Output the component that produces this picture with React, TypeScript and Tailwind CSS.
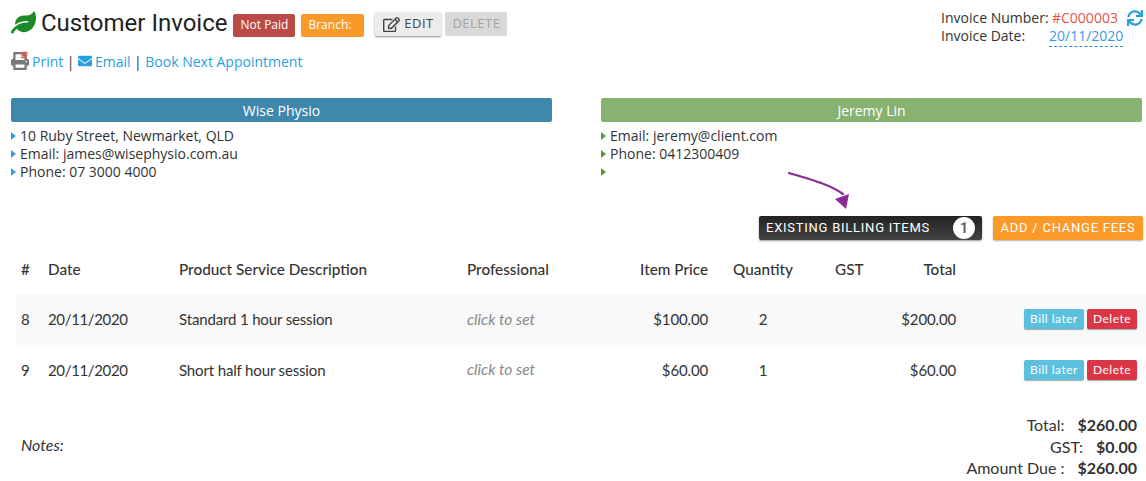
import React from "react";
import { FaEnvelope, FaLeaf, FaPrint, FaRegEdit, FaSync } from "react-icons/fa";

const rows = [
  { id: 8, date: "20/11/2020", desc: "Standard 1 hour session", price: "$100.00", qty: 2, total: "$200.00", striped: true },
  { id: 9, date: "20/11/2020", desc: "Short half hour session", price: "$60.00", qty: 1, total: "$60.00", striped: false },
];

const gridCols = "grid grid-cols-[27px_131px_288px_141px_100px_110px_72px_66px_1fr] items-center";

function InfoCard({ title, lines, headClass, arrowClass }: { title: string; lines: string[]; headClass: string; arrowClass: string }) {
  return (
    <div className="w-[541px]">
      <div className={`flex h-6 items-center justify-center rounded-[2px] text-[14px] text-white ${headClass}`}>{title}</div>
      <ul className="mt-[5px] text-[14px] leading-[18px] text-[#333]">
        {lines.map((line, i) => (
          <li key={i} className="flex h-[18px] items-center">
            <span className={`mr-[4px] h-0 w-0 border-y-[4px] border-l-[5px] border-y-transparent ${arrowClass}`} />
            {line}
          </li>
        ))}
      </ul>
    </div>
  );
}

export default function App() {
  return (
    <div className="relative h-[481px] w-[1146px] overflow-hidden bg-white font-['Open_Sans',sans-serif] text-[#333]">
      <div className="flex justify-between pl-[11px] pr-[3px] pt-[9px]">
        <div>
          <div className="flex h-[27px] items-center">
            <FaLeaf className="h-[25px] w-[25px] text-[#1d8a2a]" />
            <h1 className="ml-[5px] font-['Roboto',sans-serif] text-[24px] text-[#222]">Customer Invoice</h1>
            <span className="ml-[6px] mt-[5px] flex h-[23px] w-[62px] items-center justify-center rounded-[2px] bg-[#b94a48] text-[12px] text-white">Not Paid</span>
            <span className="ml-[6px] mt-[5px] flex h-[23px] w-[63px] items-center rounded-[2px] bg-[#f89a2a] pl-[7px] text-[12px] text-white">Branch:</span>
            <button className="ml-[11px] mt-[3px] flex h-[24px] w-[66px] items-center justify-center gap-[4px] rounded-[2px] bg-[#ececec] text-[13px] tracking-[0.5px] text-[#444] shadow-[0_1px_2px_rgba(0,0,0,0.45)]">
              <FaRegEdit className="h-[17px] w-[17px]" />
              EDIT
            </button>
            <button className="ml-[4px] mt-[3px] flex h-[24px] w-[62px] items-center justify-center rounded-[2px] bg-[#d9d9d9] text-[13px] tracking-[0.5px] text-[#a3a3a3]">DELETE</button>
          </div>
          <div className="mt-[15px] flex h-[20px] items-center text-[14px] text-[#2a9fdf]">
            <span className="relative mr-[3px]">
              <FaPrint className="h-[18px] w-[18px] text-[#777]" />
              <svg className="absolute right-0 top-[-1px]" width="9" height="9" viewBox="0 0 9 9">
                <path d="M7.5 1.5 H3 L2 3.5 H6.5 L5.5 6.5 H1" fill="none" stroke="#e8574a" strokeWidth="1.6" />
              </svg>
            </span>
            <span>Print</span>
            <span className="mx-[3.5px] text-[#333]">|</span>
            <FaEnvelope className="mr-[3px] h-[14px] w-[14px]" />
            <span>Email</span>
            <span className="mx-[3.5px] text-[#333]">|</span>
            <span>Book Next Appointment</span>
          </div>
        </div>
        <div className="w-[202px] whitespace-nowrap text-[14px] leading-[18px]">
          <div className="flex">
            <span className="w-[111px]">Invoice Number:</span>
            <span className="text-[#e2574c]">#C000003</span>
            <FaSync className="ml-[9px] mt-[1px] h-[16px] w-[16px] text-[#2a9fdf]" />
          </div>
          <div className="flex">
            <span className="w-[108px]">Invoice Date:</span>
            <span className="border-b border-dashed border-[#2a8ae0] pb-[1px] text-[#3b9ae8]">20/11/2020</span>
          </div>
        </div>
      </div>

      <div className="mt-[27px] flex justify-between pl-[11px] pr-[4px]">
        <InfoCard
          title="Wise Physio"
          headClass="bg-[#3f87ab]"
          arrowClass="border-l-[#3b9ae8]"
          lines={["10 Ruby Street, Newmarket, QLD", "Email: james@wisephysio.com.au", "Phone: 07 3000 4000"]}
        />
        <InfoCard
          title="Jeremy Lin"
          headClass="bg-[#87b272]"
          arrowClass="border-l-[#5a9a3c]"
          lines={["Email: jeremy@client.com", "Phone: 0412300409", ""]}
        />
      </div>

      {/* annotation arrow */}
      <svg className="absolute left-[785px] top-[168px]" width="70" height="46" viewBox="0 0 70 46">
        <path d="M4 5 C 24 11, 44 16, 58 26" fill="none" stroke="#8e2a96" strokeWidth="2.2" strokeLinecap="round" />
        <path d="M50 31 L64 26 L61 41 Z" fill="#8e2a96" />
      </svg>

      <div className="mt-[35px] flex justify-end gap-[11px] pr-[3px] font-['Roboto',sans-serif] text-[13px] tracking-[0.75px] text-white">
        <div className="flex h-6 w-[223px] items-center justify-between rounded-[2px] bg-gradient-to-b from-[#222] to-[#444] px-[7px] shadow-[0_1px_2px_rgba(0,0,0,0.4)]">
          EXISTING BILLING ITEMS
          <span className="flex h-[22px] w-[22px] items-center justify-center rounded-full bg-white text-[14px] font-bold tracking-normal text-[#666]">1</span>
        </div>
        <div className="flex h-6 w-[150px] items-center justify-center rounded-[2px] bg-[#fb9a28] shadow-[0_1px_2px_rgba(0,0,0,0.3)]">ADD / CHANGE FEES</div>
      </div>

      <div className="ml-[16px] mt-[17px] font-['Lato',sans-serif] text-[15px] tracking-[-0.15px] text-[#333]">
        <div className={`${gridCols} h-[24px] px-[5px] text-[15.3px] font-medium tracking-normal`}>
          <span>#</span>
          <span>Date</span>
          <span>Product Service Description</span>
          <span>Professional</span>
          <span className="text-right">Item Price</span>
          <span className="text-center">Quantity</span>
          <span className="pl-[17px]">GST</span>
          <span className="text-right">Total</span>
          <span />
        </div>
        <div className="mt-[13px]">
          {rows.map((r) => (
            <div key={r.id} className={`${gridCols} h-[50.5px] px-[5px] ${r.striped ? "bg-[#f9f9f9]" : ""}`}>
              <span>{r.id}</span>
              <span className="tracking-[-0.35px]">{r.date}</span>
              <span>{r.desc}</span>
              <span className="text-[15.5px] italic tracking-normal text-[#888]">click to set</span>
              <span className="text-right">{r.price}</span>
              <span className="text-center">{r.qty}</span>
              <span />
              <span className="text-right">{r.total}</span>
              <div className="flex justify-end gap-[3px] pr-[4px] text-[12px] tracking-[0.5px] text-white">
                <button className="flex h-5 w-[60px] items-center justify-center rounded-[2px] bg-[#5bc0de] shadow-[0_1px_1px_rgba(0,0,0,0.35)]">Bill later</button>
                <button className="flex h-5 w-[50px] items-center justify-center rounded-[2px] bg-[#dc3545] shadow-[0_1px_1px_rgba(0,0,0,0.35)]">Delete</button>
              </div>
            </div>
          ))}
        </div>
      </div>

      <div className="mt-[19px] flex items-start justify-between pl-[21px] pr-[9px] font-['Lato',sans-serif] text-[#333]">
        <span className="mt-[19px] text-[16px] italic">Notes:</span>
        <div className="text-right text-[16px] leading-[21.5px]">
          <div>Total:<b className="ml-[13px]">$260.00</b></div>
          <div>GST:<b className="ml-[13px]">$0.00</b></div>
          <div>Amount Due :<b className="ml-[13px]">$260.00</b></div>
        </div>
      </div>
    </div>
  );
}
